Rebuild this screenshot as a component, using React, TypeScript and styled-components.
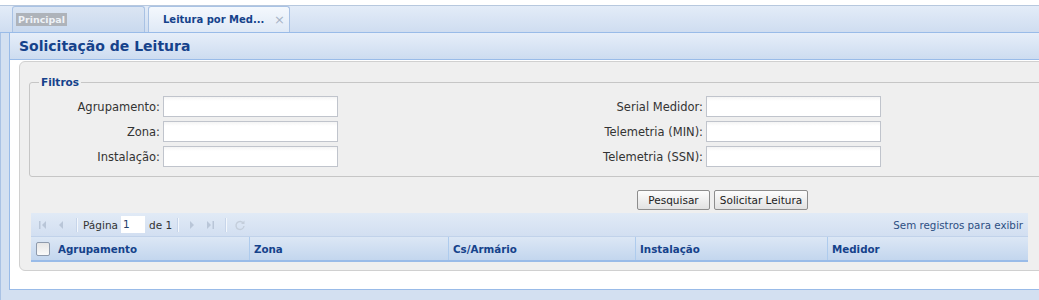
import styled, { createGlobalStyle } from "styled-components";

const GlobalStyle = createGlobalStyle`
  html, body {
    margin: 0;
    padding: 0;
    background: #ffffff;
  }
  body {
    font-family: "DejaVu Sans", Tahoma, sans-serif;
    font-size: 11px;
  }
`;

const leftFields = ["Agrupamento:", "Zona:", "Instalação:"];
const rightFields = ["Serial Medidor:", "Telemetria (MIN):", "Telemetria (SSN):"];

const columns = [
  { title: "Agrupamento", width: 218, checkbox: true },
  { title: "Zona", width: 199 },
  { title: "Cs/Armário", width: 187 },
  { title: "Instalação", width: 192 },
  { title: "Medidor", width: 201 },
];

const NavIcon = ({ kind }: { kind: string }) => (
  <svg width="12" height="12" viewBox="0 0 12 12">
    {kind === "first" && (
      <>
        <rect x="2" y="2" width="1.5" height="8" fill="#b9c6d8" />
        <path d="M9 2 L5 6 L9 10 Z" fill="#b9c6d8" />
      </>
    )}
    {kind === "prev" && <path d="M8 2 L4 6 L8 10 Z" fill="#b9c6d8" />}
    {kind === "next" && <path d="M4 2 L8 6 L4 10 Z" fill="#b9c6d8" />}
    {kind === "last" && (
      <>
        <path d="M3 2 L7 6 L3 10 Z" fill="#b9c6d8" />
        <rect x="8.5" y="2" width="1.5" height="8" fill="#b9c6d8" />
      </>
    )}
    {kind === "refresh" && (
      <>
        <path
          d="M9.5 4.5 A4 4 0 1 0 10 7"
          fill="none"
          stroke="#c4cedb"
          strokeWidth="1.4"
        />
        <path d="M10.5 1.5 L10.5 5 L7 5 Z" fill="#c4cedb" />
      </>
    )}
  </svg>
);

export default function App() {
  return (
    <>
      <GlobalStyle />
      <Page>
        <TabStrip>
          <Tab>
            <TabDimText>Principal</TabDimText>
          </Tab>
          <Tab active>
            <TabText>Leitura por Med...</TabText>
            <TabClose>×</TabClose>
          </Tab>
        </TabStrip>

        <Frame>
          <PanelHeader>Solicitação de Leitura</PanelHeader>
          <PanelBody>
            <FormBox>
              <Fieldset>
                <Legend>Filtros</Legend>
                <FieldColumns>
                  <FieldGrid labelWidth={133}>
                    {leftFields.map((f) => (
                      <FieldRow key={f}>
                        <Label>{f}</Label>
                        <TextInput />
                      </FieldRow>
                    ))}
                  </FieldGrid>
                  <FieldGrid labelWidth={143} offset={225}>
                    {rightFields.map((f) => (
                      <FieldRow key={f}>
                        <Label>{f}</Label>
                        <TextInput />
                      </FieldRow>
                    ))}
                  </FieldGrid>
                </FieldColumns>
              </Fieldset>

              <ButtonBar>
                <Button width={73}>Pesquisar</Button>
                <Button width={94}>Solicitar Leitura</Button>
              </ButtonBar>

              <Grid>
                <PagingBar>
                  <ToolIcon>
                    <NavIcon kind="first" />
                  </ToolIcon>
                  <ToolIcon>
                    <NavIcon kind="prev" />
                  </ToolIcon>
                  <ToolSep />
                  <PagingText>Página</PagingText>
                  <PageInput>1</PageInput>
                  <PagingText>de 1</PagingText>
                  <ToolSep />
                  <ToolIcon>
                    <NavIcon kind="next" />
                  </ToolIcon>
                  <ToolIcon>
                    <NavIcon kind="last" />
                  </ToolIcon>
                  <ToolSep />
                  <ToolIcon>
                    <NavIcon kind="refresh" />
                  </ToolIcon>
                  <EmptyMsg>Sem registros para exibir</EmptyMsg>
                </PagingBar>
                <HeaderRow>
                  {columns.map((c, i) => (
                    <HeaderCell key={c.title} width={c.width} first={i === 0}>
                      {c.checkbox && <CheckBox />}
                      {c.title}
                    </HeaderCell>
                  ))}
                </HeaderRow>
              </Grid>
            </FormBox>
          </PanelBody>
        </Frame>
      </Page>
    </>
  );
}

const Page = styled.div`
  width: 1039px;
  height: 300px;
  overflow: hidden;
  display: flex;
  flex-direction: column;
  background: #ffffff;
  padding-top: 5px;
  box-sizing: border-box;
`;

const TabStrip = styled.div`
  height: 28px;
  flex-shrink: 0;
  display: flex;
  align-items: flex-end;
  gap: 3px;
  padding-left: 12px;
  background: linear-gradient(#e3ecf8, #cfddf0);
  border-top: 1px solid #b7c8de;
  border-bottom: 1px solid #99bbe8;
  box-sizing: border-box;
`;

const Tab = styled.div<{ active?: boolean }>`
  width: ${(p) => (p.active ? 142 : 133)}px;
  height: 26px;
  box-sizing: border-box;
  display: flex;
  align-items: center;
  white-space: nowrap;
  padding-left: ${(p) => (p.active ? 14 : 3)}px;
  border: 1px solid #a9c2e4;
  border-bottom: none;
  border-radius: 3px 3px 0 0;
  background: ${(p) =>
    p.active
      ? "linear-gradient(#f4f8fd, #dfe9f6)"
      : "linear-gradient(#dbe5f3, #c9d9ee)"};
`;

const TabDimText = styled.span`
  font-weight: bold;
  color: #eef2f7;
  background: #aeb3ba;
  padding: 1px 2px;
  font-size: 9.5px;
`;

const TabText = styled.span`
  font-weight: bold;
  color: #15428b;
  font-size: 10px;
  flex: 1;
`;

const TabClose = styled.span`
  color: #a8b4c6;
  font-size: 13px;
  margin-right: 4px;
`;

const Frame = styled.div`
  flex: 1;
  display: flex;
  flex-direction: column;
  background: #d3e0f1;
  padding-left: 8px;
  padding-bottom: 10px;
  border-left: 1px solid #a9c2e4;
  box-sizing: border-box;
`;

const PanelHeader = styled.div`
  height: 27px;
  flex-shrink: 0;
  box-sizing: border-box;
  padding: 5px 0 0 9px;
  font-size: 14px;
  font-weight: bold;
  color: #15428b;
  background: linear-gradient(#e6eef9, #cddcf0);
  border-left: 1px solid #99bbe8;
  border-bottom: 1px solid #99bbe8;
`;

const PanelBody = styled.div`
  flex: 1;
  background: #ffffff;
  border-left: 1px solid #99bbe8;
  border-bottom: 1px solid #99bbe8;
  padding: 1px 0 0 9px;
  box-sizing: border-box;
  overflow: hidden;
`;

const FormBox = styled.div`
  width: 1060px;
  height: 210px;
  box-sizing: border-box;
  background: #efefef;
  border: 1px solid #d0d0d0;
  border-radius: 6px;
  padding: 14px 0 0 9px;
`;

const Fieldset = styled.fieldset`
  margin: 0;
  width: 1040px;
  height: 101px;
  box-sizing: border-box;
  border: 1px solid #c6c6c6;
  border-radius: 3px;
  padding: 8px 0 0 0;
`;

const Legend = styled.legend`
  padding: 0 2px;
  margin-left: 9px;
  font-weight: bold;
  color: #15428b;
  font-size: 10.5px;
`;

const FieldColumns = styled.div`
  display: flex;
`;

const FieldGrid = styled.div<{ labelWidth: number; offset?: number }>`
  display: flex;
  flex-direction: column;
  gap: 4px;
  margin-left: ${(p) => p.offset ?? 0}px;
  --label-width: ${(p) => p.labelWidth}px;
`;

const FieldRow = styled.div`
  display: flex;
  align-items: center;
`;

const Label = styled.label`
  width: var(--label-width);
  text-align: right;
  padding-right: 3px;
  box-sizing: border-box;
  color: #333;
  font-size: 11.5px;
`;

const TextInput = styled.input`
  width: 175px;
  height: 21px;
  box-sizing: border-box;
  border: 1px solid #c0c4cc;
  background: linear-gradient(#f4f4f4, #ffffff 4px);
  margin: 0;
  padding: 0;
`;

const ButtonBar = styled.div`
  display: flex;
  gap: 4px;
  margin: 13px 0 0 608px;
`;

const Button = styled.div<{ width: number }>`
  width: ${(p) => p.width}px;
  height: 20px;
  box-sizing: border-box;
  display: flex;
  align-items: center;
  justify-content: center;
  border: 1px solid #8d8d8d;
  border-radius: 2px;
  background: linear-gradient(#fdfdfd, #e2e2e2);
  color: #222;
  font-size: 10.5px;
`;

const Grid = styled.div`
  width: 997px;
  margin: 3px 0 0 2px;
  border-bottom: 2px solid #99bbe8;
`;

const PagingBar = styled.div`
  height: 23px;
  display: flex;
  align-items: center;
  padding-left: 4px;
  background: linear-gradient(#e1eaf6, #d2dff1);
  border-bottom: 1px solid #c1d2ea;
  color: #24406a;
`;

const ToolIcon = styled.span`
  width: 16px;
  height: 16px;
  display: flex;
  align-items: center;
  justify-content: center;
  margin-right: 2px;
`;

const ToolSep = styled.span`
  width: 1px;
  height: 14px;
  background: #c7d5ea;
  border-right: 1px solid #f3f7fc;
  margin: 0 5px;
`;

const PagingText = styled.span`
  font-size: 10.5px;
  color: #333;
`;

const PageInput = styled.span`
  width: 24px;
  height: 17px;
  box-sizing: border-box;
  background: #ffffff;
  font-size: 10.5px;
  padding-left: 2px;
  line-height: 17px;
  margin: 0 4px 0 3px;
`;

const EmptyMsg = styled.span`
  margin-left: auto;
  margin-right: 5px;
  color: #2c4e82;
  font-size: 10.3px;
`;

const HeaderRow = styled.div`
  display: flex;
  height: 23px;
  background: linear-gradient(#dce7f5, #c3d6ee);
`;

const HeaderCell = styled.div<{ width: number; first?: boolean }>`
  width: ${(p) => p.width}px;
  box-sizing: border-box;
  display: flex;
  align-items: center;
  gap: 8px;
  padding-left: ${(p) => (p.first ? 5 : 4)}px;
  border-left: ${(p) => (p.first ? "none" : "1px solid #aecbed")};
  font-weight: bold;
  color: #15428b;
  font-size: 10.3px;
`;

const CheckBox = styled.span`
  width: 14px;
  height: 14px;
  box-sizing: border-box;
  border: 1px solid #8e9aac;
  border-radius: 2px;
  background: linear-gradient(#e6e6e6, #fafafa);
`;
